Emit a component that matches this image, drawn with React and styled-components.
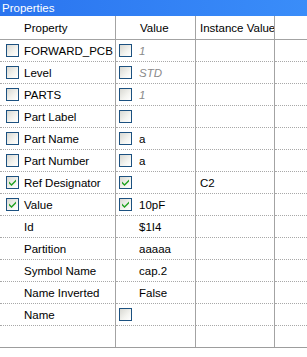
import React from 'react'
import styled, { createGlobalStyle } from 'styled-components'

const Global = createGlobalStyle`
  body {
    margin: 0;
    background: #fff;
    font-family: "Liberation Sans", Arial, sans-serif;
    font-size: 11.5px;
    color: #000;
  }
`

const Panel = styled.div`
  width: 307px;
  height: 357px;
  background: #fff;
  display: flex;
  flex-direction: column;
`

const TitleBar = styled.div`
  height: 16px;
  line-height: 16px;
  padding-left: 2px;
  color: #fff;
  background: linear-gradient(to right, #2a74ef, #3a8df9);
`

const Grid = styled.div`
  display: grid;
  grid-template-columns: 116px 80px 79px 1fr;
  border-bottom: 1px solid #9d9d9d;
`

const Cell = styled.div`
  height: ${p => (p.$head ? '23px' : '21px')};
  display: flex;
  align-items: center;
  padding-left: ${p => p.$pad}px;
  border-right: ${p => (p.$last ? 'none' : '1px solid #a3a3a3')};
  border-bottom: ${p =>
    p.$head ? '1px solid #a3a3a3' : p.$end ? 'none' : '1px dotted #a8a8a8'};
  white-space: nowrap;
  overflow: hidden;
  color: ${p => (p.$dim ? '#8a8a8a' : '#000')};
  font-style: ${p => (p.$dim ? 'italic' : 'normal')};
`

const Slot = styled.span`
  flex: none;
  width: ${p => p.$w}px;
  display: flex;
  align-items: center;
`

const Box = styled.span`
  width: 11px;
  height: 11px;
  border: 1px solid #1c5180;
  background: linear-gradient(135deg, #d8d8d2 0%, #f4f4f0 60%, #fff 100%);
  display: flex;
  align-items: center;
  justify-content: center;
`

const Check = ({ on }) => (
  <Box>
    {on && (
      <svg width="9" height="9" viewBox="0 0 9 9">
        <path d="M1 3.5 L3.5 6 L8 1.5 L8 3.5 L3.5 8 L1 5.5 Z" fill="#21a121" />
      </svg>
    )}
  </Box>
)

const rows = [
  { name: 'FORWARD_PCB', a: false, b: false, val: '1', dim: true },
  { name: 'Level', a: false, b: false, val: 'STD', dim: true },
  { name: 'PARTS', a: false, b: false, val: '1', dim: true },
  { name: 'Part Label', a: false, b: false, val: '' },
  { name: 'Part Name', a: false, b: false, val: 'a' },
  { name: 'Part Number', a: false, b: false, val: 'a' },
  { name: 'Ref Designator', a: true, b: true, val: '', inst: 'C2' },
  { name: 'Value', a: true, b: true, val: '10pF' },
  { name: 'Id', val: '$1I4' },
  { name: 'Partition', val: 'aaaaa' },
  { name: 'Symbol Name', val: 'cap.2' },
  { name: 'Name Inverted', val: 'False' },
  { name: 'Name', b: false, val: '' },
]

const Row = ({ r }) => (
  <>
    <Cell $pad={6}>
      <Slot $w={18}>{r.a !== undefined && <Check on={r.a} />}</Slot>
      {r.name}
    </Cell>
    <Cell $pad={3} $dim={r.dim}>
      <Slot $w={20}>{r.b !== undefined && <Check on={r.b} />}</Slot>
      {r.val}
    </Cell>
    <Cell $pad={4}>{r.inst}</Cell>
    <Cell $pad={4} $last />
  </>
)

export default function App() {
  return (
    <Panel>
      <Global />
      <TitleBar>Properties</TitleBar>
      <Grid>
        <Cell $head $pad={24}>Property</Cell>
        <Cell $head $pad={24}>Value</Cell>
        <Cell $head $pad={4}>Instance Value</Cell>
        <Cell $head $pad={4} $last />
        {rows.map(r => (
          <Row key={r.name} r={r} />
        ))}
        <Cell $end $pad={0} />
        <Cell $end $pad={0} />
        <Cell $end $pad={0} />
        <Cell $end $pad={0} $last />
      </Grid>
    </Panel>
  )
}
